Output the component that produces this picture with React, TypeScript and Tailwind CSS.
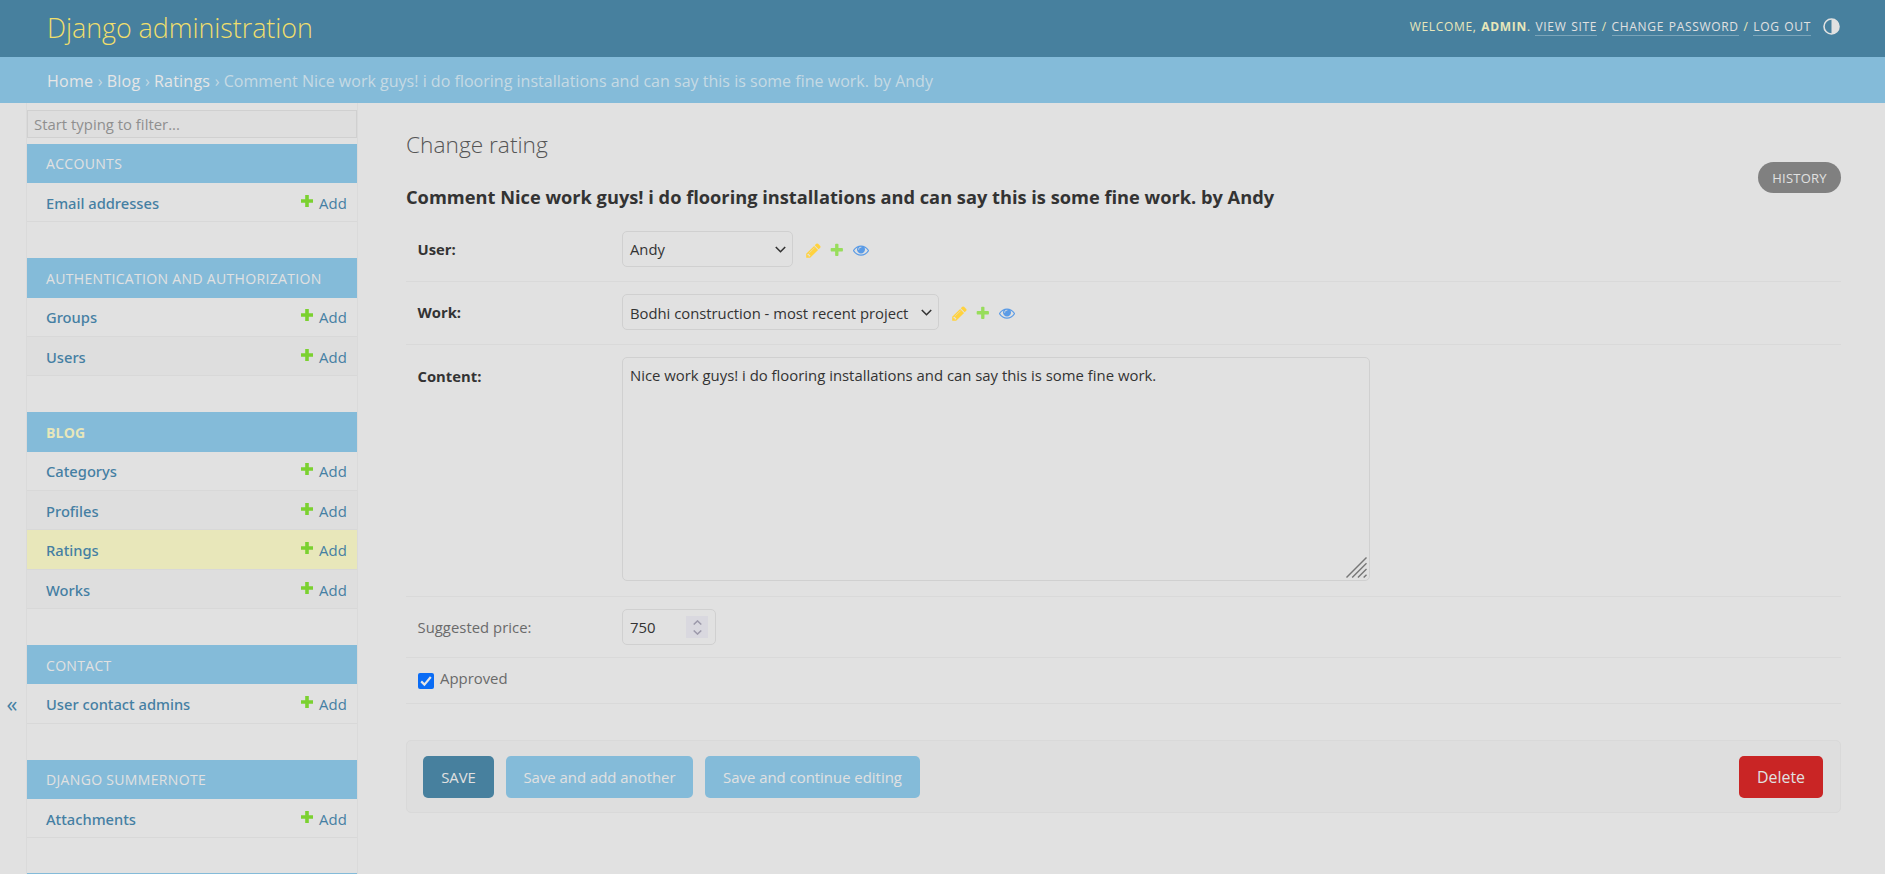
import type { ReactNode } from 'react';
import clsx from 'clsx';

const PLUS_PATH =
  'M1600 796v192q0 40-28 68t-68 28h-416v416q0 40-28 68t-68 28h-192q-40 0-68-28t-28-68v-416h-416q-40 0-68-28t-28-68v-192q0-40 28-68t68-28h416v-416q0-40 28-68t68-28h192q40 0 68 28t28 68v416h416q40 0 68 28t28 68z';

function PencilIcon() {
  return (
    <svg className="size-[17px] fill-[#ffd23f]" viewBox="0 0 1792 1792">
      <path d="M491 1536l91-91-235-235-91 91v107h128v128h107zm523-928q0-22-22-22-10 0-17 7l-542 542q-7 7-7 17 0 22 22 22 10 0 17-7l542-542q7-7 7-17zm-54-192l416 416-832 832h-416v-416zm683 96q0 53-37 90l-166 166-416-416 166-165q36-38 90-38 53 0 91 38l235 234q37 39 37 91z" />
    </svg>
  );
}

function PlusIcon({ className }: { className?: string }) {
  return (
    <svg className={className} viewBox="0 0 12 12">
      <path d="M4.2 0h3.6v4.2H12v3.6H7.8V12H4.2V7.8H0V4.2h4.2z" />
    </svg>
  );
}

function SoftPlusIcon() {
  return (
    <svg className="size-[15.6px] fill-[#98dd5c]" viewBox="0 0 1792 1792">
      <path d={PLUS_PATH} />
    </svg>
  );
}

function EyeIcon() {
  return (
    <svg className="size-4 fill-[#5a9be6]" viewBox="0 0 1792 1792">
      <path d="M1664 960q-152-236-381-353 61 104 61 225 0 185-131.5 316.5t-316.5 131.5-316.5-131.5-131.5-316.5q0-121 61-225-229 117-381 353 133 205 333.5 326.5t434.5 121.5 434.5-121.5 333.5-326.5zm-720-384q0-20-14-34t-34-14q-125 0-214.5 89.5t-89.5 214.5q0 20 14 34t34 14 34-14 14-34q0-86 61-147t147-61q20 0 34-14t14-34zm848 384q0 34-20 69-140 230-376.5 368.5t-499.5 138.5-499.5-139-376.5-368q-20-35-20-69t20-69q140-229 376.5-368t499.5-139 499.5 139 376.5 368q20 35 20 69z" />
    </svg>
  );
}

function ThemeIcon() {
  return (
    <svg className="size-[17px]" viewBox="0 0 17 17">
      <circle cx="8.5" cy="8.5" r="7.5" fill="none" stroke="#e1e1e1" strokeWidth="1.6" />
      <path d="M8.5 1a7.5 7.5 0 0 1 0 15z" fill="#e1e1e1" />
    </svg>
  );
}

function Chevron() {
  return (
    <svg className="h-[7px] w-[11px]" viewBox="0 0 11 7" fill="none" stroke="#333" strokeWidth="1.6">
      <path d="M0.8 1l4.7 4.7L10.2 1" />
    </svg>
  );
}

type Item = { name: string; height: string; tone?: string; nudge?: string };
type Module = { title: string; header: string; current?: boolean; gap: string; items: Item[] };

const ODD = 'bg-[#e1e1e1]';
const EVEN = 'bg-[#dedede]';
const modules: Module[] = [
  { title: 'ACCOUNTS', header: 'h-[39px] pb-px', gap: 'mb-9', items: [{ name: 'Email addresses', height: 'h-[39px]' }] },
  {
    title: 'AUTHENTICATION AND AUTHORIZATION',
    header: 'h-10 pt-px',
    gap: 'mb-9',
    items: [
      { name: 'Groups', height: 'h-[39px]', nudge: 'pb-0.5' },
      { name: 'Users', height: 'h-[39px]', tone: EVEN },
    ],
  },
  {
    title: 'BLOG',
    header: 'h-10 pt-px',
    current: true,
    gap: 'mb-9',
    items: [
      { name: 'Categorys', height: 'h-[39px]', nudge: 'pb-0.5' },
      { name: 'Profiles', height: 'h-[39px]', tone: EVEN },
      { name: 'Ratings', height: 'h-10', tone: 'bg-[#e8e7ba]' },
      { name: 'Works', height: 'h-[39px]', tone: EVEN },
    ],
  },
  { title: 'CONTACT', header: 'h-[39px] pt-px', gap: 'mb-9', items: [{ name: 'User contact admins', height: 'h-10' }] },
  {
    title: 'DJANGO SUMMERNOTE',
    header: 'h-[39px] pb-px',
    gap: 'mb-[35px]',
    items: [{ name: 'Attachments', height: 'h-[39px]' }],
  },
  { title: '', header: 'h-[39px]', gap: '', items: [] },
];

function Sidebar() {
  return (
    <nav className="flex w-[332px] shrink-0 flex-col overflow-hidden border-x border-[#dadada] pt-[7px]">
      <input
        className="mb-1.5 h-7 w-full shrink-0 border border-[#d0d0d0] bg-[#dedede] px-1.5 text-[14.9px] placeholder:text-[#8f8f8f]"
        placeholder="Start typing to filter..."
      />
      {modules.map((m) => (
        <section key={m.title} className={clsx('shrink-0', m.gap)}>
          <h2
            className={clsx(
              'flex items-center bg-[#84bbd9] pl-[19px] text-[14px]',
              m.header,
              m.current ? 'font-bold tracking-[0.2px] text-[#e8e7ba]' : 'tracking-[0.33px] text-[#e1e1e1]',
            )}
          >
            {m.title}
          </h2>
          {m.items.map((it) => (
            <div
              key={it.name}
              className={clsx(
                'flex items-center border-b border-[#d8d8d8] pl-[19px] pr-[10px] text-[14.9px] text-[#457fa3]',
                it.height,
                it.nudge,
                it.tone ?? ODD,
              )}
            >
              <a className="grow pt-0.5 font-['Noto_Sans',sans-serif] text-[14.7px] font-medium">{it.name}</a>
              <PlusIcon className="mr-[6px] mb-[3px] size-3 fill-[#7bd130]" />
              <a className="pt-0.5 tracking-[0.15px]">Add</a>
            </div>
          ))}
        </section>
      ))}
    </nav>
  );
}

function SelectBox({ width, nudge, children }: { width: string; nudge: string; children: ReactNode }) {
  return (
    <div
      className={clsx(
        'flex h-9 items-center justify-between rounded-[5px] border border-[#d0d0d0] pl-[7px] pr-1.5 text-[14.8px] text-[#333]',
        width,
      )}
    >
      <span className={clsx('whitespace-nowrap', nudge)}>{children}</span>
      <Chevron />
    </div>
  );
}

function RelatedLinks() {
  return (
    <div className="flex h-9 items-center pl-[12px] pt-0.5">
      <PencilIcon />
      <span className="ml-[7px]">
        <SoftPlusIcon />
      </span>
      <span className="ml-2">
        <EyeIcon />
      </span>
    </div>
  );
}

function Row({ className, label, bold, children }: { className: string; label: string; bold?: boolean; children: ReactNode }) {
  return (
    <div className={clsx('flex items-start border-b border-[#d9d9d9] pl-[11.5px] pt-3', className)}>
      <label
        className={clsx(
          'w-[204.5px] text-[14.8px] leading-5',
          bold ? 'font-bold text-[#333]' : 'tracking-[0.05px] text-[#6a6a6a]',
          label === 'Content:' ? 'pt-[9px]' : 'pt-2',
        )}
      >
        {label}
      </label>
      {children}
    </div>
  );
}

function Crumb({ children }: { children: ReactNode }) {
  return <a className="mr-[0.4px] tracking-[0.22px] text-[#e6e6e6]">{children}</a>;
}

function UserLink({ children }: { children: ReactNode }) {
  return <a className="border-b border-[#7ba5ba] text-[#e1e1e1]">{children}</a>;
}

const rating = 'Comment Nice work guys! i do flooring installations and can say this is some fine work. by Andy';

export default function App() {
  return (
    <div className="flex h-[874px] w-[1885px] flex-col overflow-hidden bg-[#e1e1e1] font-['Open_Sans','Noto_Sans',sans-serif] text-[#333]">
      <header className="flex h-[57px] shrink-0 items-center justify-between bg-[#47809e] pl-[47px] pr-[45px]">
        <h1 className="pb-0.5 text-[26.9px] font-light leading-9 tracking-[-0.05px] text-[#f0de6c]">Django administration</h1>
        <div className="flex items-center pb-1 text-[12px] tracking-[0.68px] text-[#e8e7ba]">
          <div className="whitespace-pre [word-spacing:0.9px]">
            WELCOME, <strong>ADMIN</strong>. <UserLink>VIEW SITE</UserLink> / <UserLink>CHANGE PASSWORD</UserLink> /{' '}
            <UserLink>LOG OUT</UserLink>
          </div>
          <button className="ml-3">
            <ThemeIcon />
          </button>
        </div>
      </header>
      <div className="flex h-[46px] shrink-0 items-center whitespace-pre bg-[#84bbd9] pl-[47px] pt-0.5 text-[16.05px] text-[#c6dae4]">
        <Crumb>Home</Crumb> › <Crumb>Blog</Crumb> › <Crumb>Ratings</Crumb> › {rating}
      </div>

      <div className="flex min-h-0 grow">
        <button className="flex w-[26px] shrink-0 items-start justify-center pr-0.5 pt-[588px] text-[22px] leading-6 text-[#457fa3]">
          «
        </button>
        <Sidebar />
        <main className="flex grow flex-col pl-12 pr-[44px] pt-[26px]">
          <h1 className="h-[31px] text-[22.7px] font-light leading-8 text-[#555]">Change rating</h1>
          <div className="flex h-[59px] justify-between">
            <h2 className="pt-[25px] text-[18.24px] font-bold leading-6">{rating}</h2>
            <a className="mt-0.5 flex h-[31px] w-[83px] items-center justify-center rounded-full bg-[#808080] pt-[3px] text-[13px] tracking-[0.24px] text-[#e1e1e1]">
              HISTORY
            </a>
          </div>

          <Row className="h-[63px]" label="User:" bold>
            <SelectBox width="w-[171px]" nudge="pt-0">
              Andy
            </SelectBox>
            <RelatedLinks />
          </Row>
          <Row className="h-[63px]" label="Work:" bold>
            <SelectBox width="w-[317px]" nudge="pt-0.5">
              Bodhi construction - most recent project
            </SelectBox>
            <RelatedLinks />
          </Row>
          <Row className="h-[252px]" label="Content:" bold>
            <div className="flex h-[224px] w-[748px] items-end justify-between rounded-[5px] border border-[#d0d0d0] pl-[7px]">
              <p className="self-start pt-[7px] text-[14.88px] leading-5">
                Nice work guys! i do flooring installations and can say this is some fine work.
              </p>
              <svg className="mb-0.5 mr-0.5 size-[21px] shrink-0" viewBox="0 0 22 22" stroke="#777" strokeWidth="1.5">
                <path d="M0.5 21.5L21.5 0.5M6.5 21.5L21.5 6.5M12.5 21.5L21.5 12.5M18.5 21.5L21.5 18.5" />
              </svg>
            </div>
          </Row>
          <Row className="h-[61px]" label="Suggested price:">
            <div className="flex h-9 w-[94px] items-center justify-between rounded-[5px] border border-[#d0d0d0] pl-[7px] pr-[7px] text-[14.9px]">
              <span>750</span>
              <span className="flex h-[22px] w-[22px] flex-col items-center justify-center gap-[5px] bg-[#d9d8df]">
                <svg className="h-[5px] w-[9px]" viewBox="0 0 9 5" fill="none" stroke="#9d9aab" strokeWidth="1.5">
                  <path d="M0.7 4.5L4.5 0.9L8.3 4.5" />
                </svg>
                <svg className="h-[5px] w-[9px]" viewBox="0 0 9 5" fill="none" stroke="#9d9aab" strokeWidth="1.5">
                  <path d="M0.7 0.5L4.5 4.1L8.3 0.5" />
                </svg>
              </span>
            </div>
          </Row>
          <div className="flex h-[46px] items-start border-b border-[#d9d9d9] pl-3 pt-[10px] text-[14.9px] text-[#6a6a6a]">
            <svg className="mr-1.5 mt-[5px] size-4" viewBox="0 0 16 16">
              <rect width="16" height="16" rx="2" fill="#0a6cf5" />
              <path d="M3.2 8.4l3.2 3.2 6.4-7.6" fill="none" stroke="#e6e6e6" strokeWidth="2.2" />
            </svg>
            <label className="leading-5">Approved</label>
          </div>

          <div className="mt-9 flex h-[73px] items-center gap-3 rounded-[5px] border border-[#d9d9d9] bg-[#dedede] pl-4 pr-[17px] text-[14.9px] text-[#e1e1e1]">
            <button className="h-[42px] w-[71px] rounded-[5px] bg-[#47809e] pt-px">SAVE</button>
            <button className="h-[42px] w-[187px] rounded-[5px] bg-[#84bbd9] pt-px">Save and add another</button>
            <button className="h-[42px] w-[215px] rounded-[5px] bg-[#84bbd9] pt-px">Save and continue editing</button>
            <a className="ml-auto flex h-[42px] w-[84px] items-center justify-center rounded-[5px] bg-[#c92525] pt-[3px] text-[15.9px]">
              Delete
            </a>
          </div>
        </main>
      </div>
    </div>
  );
}
